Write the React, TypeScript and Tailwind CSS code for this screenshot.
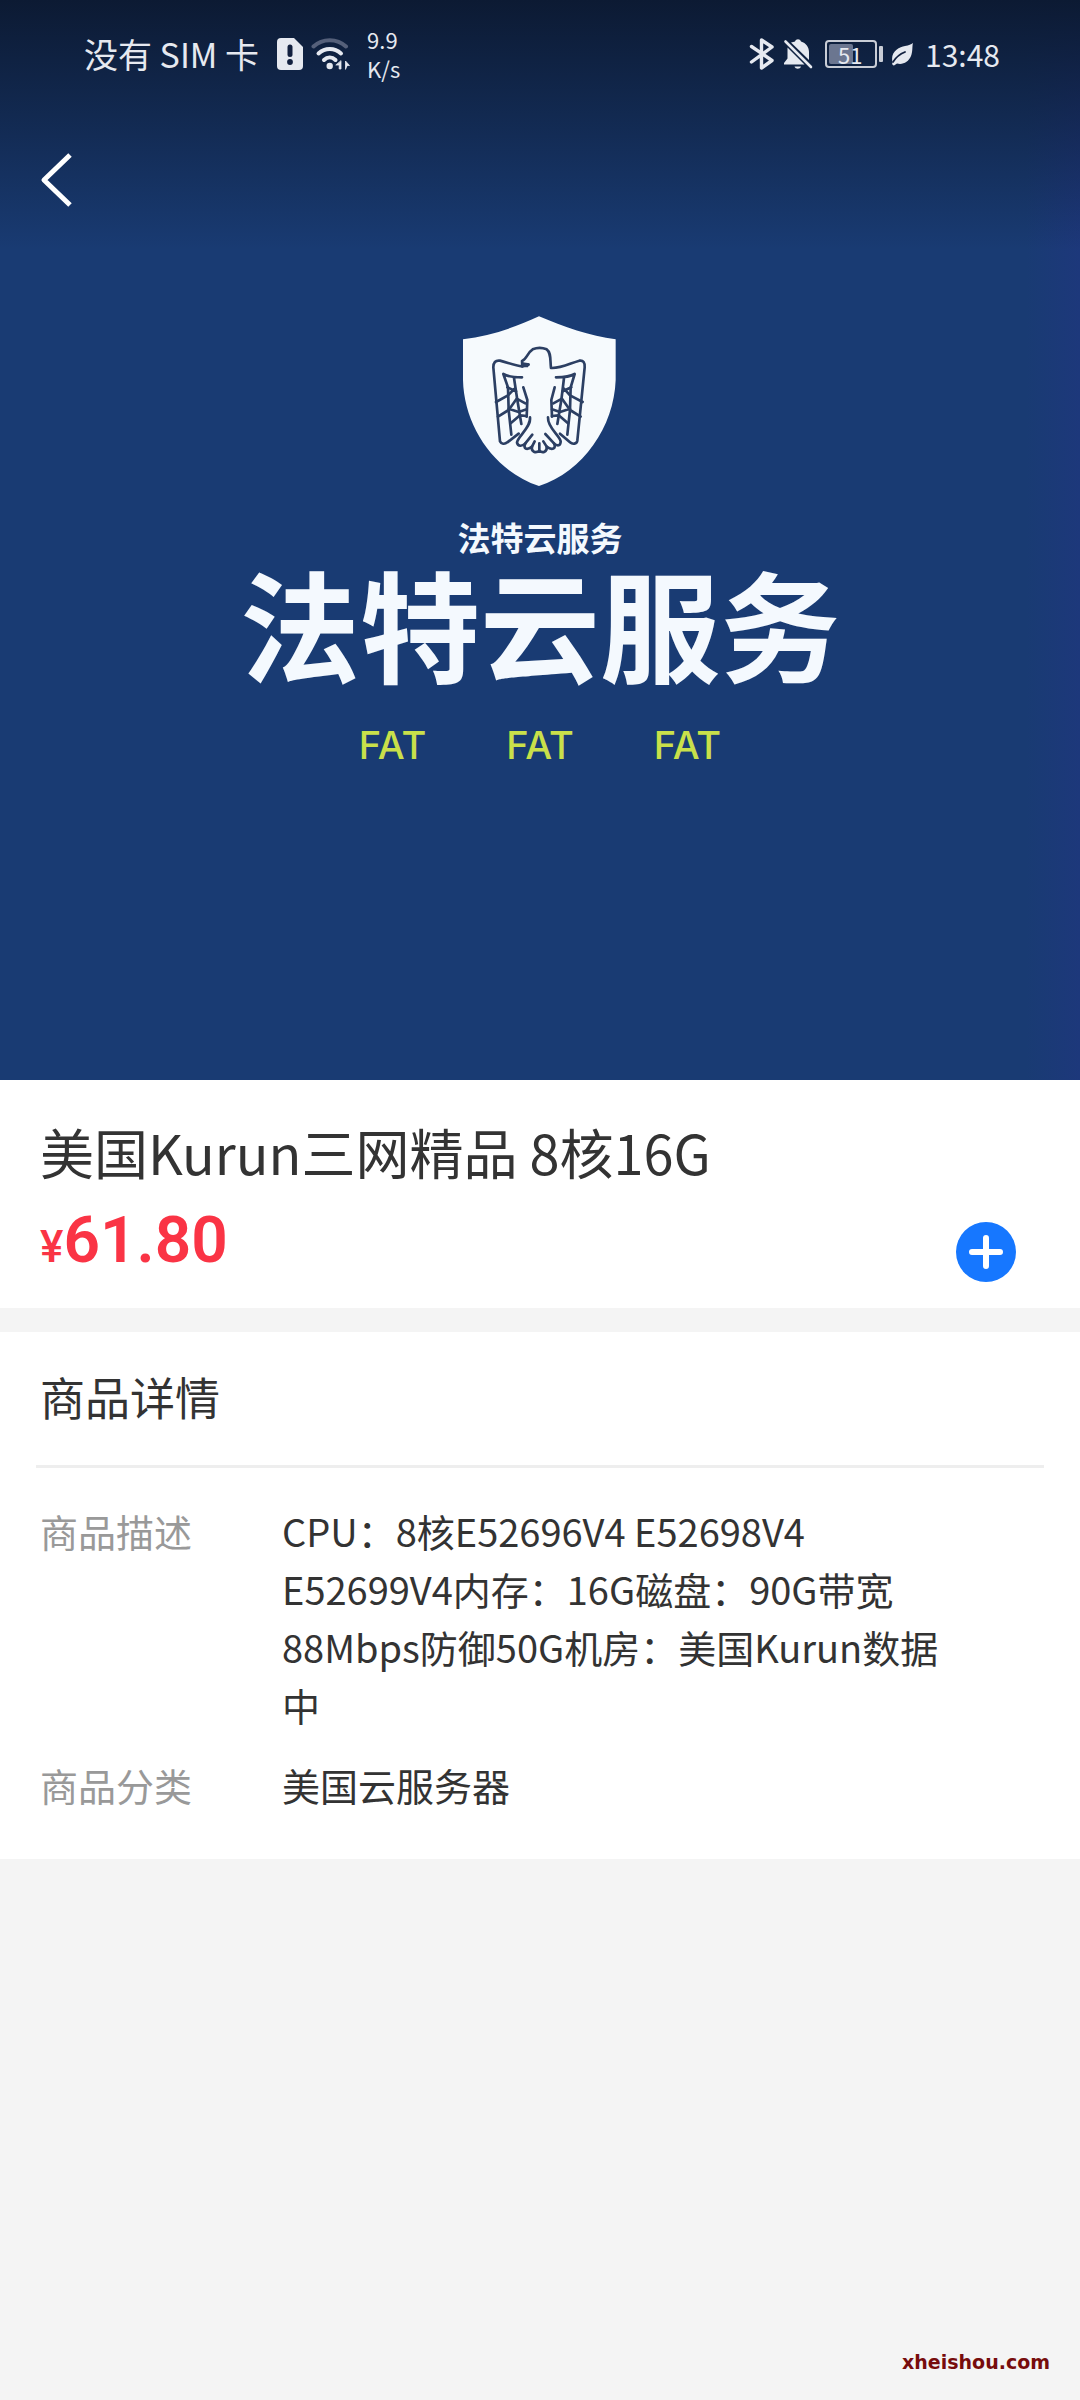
import React from "react";

function SimAlertIcon() {
  return (
    <svg className="h-8 w-[26px]" viewBox="0 0 26 32" aria-hidden="true">
      <path d="M4 0h13l9 9v19a4 4 0 0 1-4 4H4a4 4 0 0 1-4-4V4a4 4 0 0 1 4-4z" fill="#e6e9f0" />
      <rect x="10.500" y="6.500" width="5" height="12.500" rx="2.500" fill="#12203f" />
      <circle cx="13" cy="24" r="2.900" fill="#12203f" />
    </svg>
  );
}

function WifiIcon() {
  return (
    <svg className="h-8 w-10" viewBox="0 0 40 32" fill="none" strokeLinecap="round" aria-hidden="true">
      <path d="M2.500 8.500C11.500 0 26 0 35 8.500" stroke="#55607a" strokeWidth="4" />
      <path d="M7.500 15.500C14 9.500 23.500 9.500 30 15.500" stroke="#e6e9f0" strokeWidth="4" />
      <path d="M13 22C16.500 18.500 21 18.500 24.500 22" stroke="#e6e9f0" strokeWidth="4" />
      <circle cx="18.700" cy="28" r="3.200" fill="#e6e9f0" />
      <path d="M30 23v8h-1.800v-4h-3zM34.500 31v-8l4 4.500h-2z" fill="#e6e9f0" stroke="#e6e9f0" strokeWidth="0.8" />
    </svg>
  );
}

function BluetoothIcon() {
  return (
    <svg className="h-8 w-[26px]" viewBox="0 0 26 32" fill="none" stroke="#e6e9f0" strokeWidth="3.400" strokeLinecap="round" strokeLinejoin="round" aria-hidden="true">
      <path d="M2.500 8.500L23 22.500L12.500 30V2L23 9L2.500 24" />
    </svg>
  );
}

function BellOffIcon() {
  return (
    <svg className="h-8 w-[30px]" viewBox="0 0 30 32" aria-hidden="true">
      <path d="M8 4.500C9.500 4 11 3.800 12 3.500C13 0.500 17 0.500 18 3.500C23 5 26 9 26 14V22z" fill="#e6e9f0" />
      <path d="M4.500 9.500L21.500 26.500H1V25L4.500 20.500z" fill="#e6e9f0" />
      <path d="M11.500 28.500h6.500c-1 3-5.500 3-6.500 0z" fill="#e6e9f0" />
      <path d="M2.500 3.500L28 29" stroke="#e6e9f0" strokeWidth="2.600" strokeLinecap="round" />
    </svg>
  );
}

function LeafIcon() {
  return (
    <svg className="h-6 w-[22px]" viewBox="0 0 22 24" aria-hidden="true">
      <path d="M22 1C21 4 22 9 20 14C17.500 20 12 23 6 21.500L3 23.500C1 23 1 21.500 1.500 20C-1 10 8 5 14 4C18 3.300 20 2.500 22 1z" fill="#e6e9f0" />
      <path d="M2 20C5 15 9 12 14 10" fill="none" stroke="#12203f" strokeWidth="1.800" strokeLinecap="round" />
    </svg>
  );
}

function StatusBar() {
  return (
    <div className="flex h-[108px] items-center justify-between pl-[84px] pr-20 text-[#e6e9f0]">
      <div className="flex items-center">
        <span className="text-[34px] leading-10">没有 SIM 卡</span>
        <span className="ml-[18px]">
          <SimAlertIcon />
        </span>
        <span className="ml-2">
          <WifiIcon />
        </span>
        <span className="ml-4 flex flex-col text-[22px] leading-[29px]">
          <span>9.9</span>
          <span>K/s</span>
        </span>
      </div>
      <div className="flex items-center">
        <BluetoothIcon />
        <span className="ml-2">
          <BellOffIcon />
        </span>
        <span className="ml-3 flex items-center gap-[2px]">
          <span className="flex h-7 w-[52px] items-center rounded-[4px] border-2 border-[#c9cdd6] p-[2px]">
            <span className="flex h-5 w-6 items-center rounded-[2px] bg-[#6b7690] pl-[9px] text-[22px] leading-5">51</span>
          </span>
          <span className="h-4 w-1 rounded-[1px] bg-[#c9cdd6]" />
        </span>
        <span className="ml-2">
          <LeafIcon />
        </span>
        <time className="ml-3 text-[30px] leading-10">13:48</time>
      </div>
    </div>
  );
}

function EagleShield() {
  return (
    <svg className="h-[172px] w-40" viewBox="60 45 480 516" aria-hidden="true">
      <path d="M297 49C370 80 450 108 527 118V240C522 380 430 515 297 558C165 515 72 380 69 240V118C150 108 220 84 297 49z" fill="#f6fafd" />
      <g fill="none" stroke="#2c3f63" strokeWidth="8" strokeLinejoin="round" strokeLinecap="round">
        <path d="M266 194L247 199L246 183C260 178 262 158 278 148C290 143 308 143 320 148C334 158 330 180 333 204C362 206 390 190 418 182C430 180 435 188 434 202L412 422C410 432 398 434 390 427L360 401" />
        <path d="M247 199C224 196 204 188 180 182C166 180 160 188 160 202L180 424C184 432 194 434 202 427L236 401" />
        <path d="M190 222C208 232 226 232 246 232M190 222L204 262L206 330L214 404M222 234L232 300L244 372M250 262L262 300L260 350" />
        <path d="M404 222C388 232 368 232 348 232M404 222L392 262L390 330L382 404M372 234L364 300L352 372M344 262L334 300L336 350" />
        <path d="M168 306L204 286L224 266M202 262L228 274M174 350L206 330L230 296L256 310M206 326L236 336L260 328M212 370L240 346L260 348" />
        <path d="M428 306L390 286L372 266M394 262L368 274M422 350L390 330L366 296L340 310M390 326L360 336L336 328M384 370L356 346L336 348" />
        <path d="M270 352C274 382 232 410 231 428C234 440 246 440 256 430C248 446 260 452 276 440C272 456 288 460 298 452C308 460 322 456 320 440C336 452 350 446 342 430C352 440 362 438 362 424C358 406 322 382 324 352" />
        <path d="M277 404L256 430M284 424L276 440M298 430V452M310 424L320 440M316 402L342 430" />
      </g>
      <path d="M244 186L268 190L264 202L246 202z" fill="#2c3f63" />
    </svg>
  );
}

function Hero() {
  return (
    <section className="relative w-full bg-[#193b73]">
      <div className="flex aspect-square w-full flex-col items-center bg-linear-to-r from-transparent from-95% to-[#1d387b] pt-[315px] font-['Liberation_Sans','Noto_Sans_CJK_SC',sans-serif] text-[#f4f9fe]">
        <EagleShield />
        <p className="mt-[29px] text-[33px] font-bold leading-[48px]">法特云服务</p>
        <h2 className="mt-2 text-[120px] font-bold leading-[120px]">法特云服务</h2>
        <p className="mt-[29px] flex gap-20 font-['Inter',sans-serif] text-[38px] font-medium leading-[48px] text-[#c9e04a]">
          <span>FAT</span>
          <span>FAT</span>
          <span>FAT</span>
        </p>
      </div>
      <header className="absolute inset-x-0 top-0 h-[250px] bg-linear-to-b from-[#0c1a33] to-transparent">
        <StatusBar />
        <button type="button" aria-label="返回" className="mt-9 flex h-[72px] w-[88px] items-center pl-10">
          <svg className="h-14 w-8" viewBox="0 0 32 56" fill="none" stroke="#fff" strokeWidth="5" strokeLinejoin="round" aria-hidden="true">
            <path d="M30 3L4 28L30 53" />
          </svg>
        </button>
      </header>
    </section>
  );
}

function ProductSummary() {
  return (
    <section className="bg-white px-10 pb-[26px] pt-9">
      <h1 className="text-[54px] leading-[72px] text-[#333]">美国Kurun三网精品 8核16G</h1>
      <div className="flex items-end justify-between pr-6">
        <p className="pt-[18px] font-['Roboto',sans-serif] text-[64px] font-semibold leading-[70px] text-[#fa3445]">
          <span className="text-[44px] font-medium">¥</span>
          <span>61.80</span>
        </p>
        <button type="button" aria-label="加入购物车" className="flex size-[60px] items-center justify-center rounded-full bg-[#1677ff]">
          <svg className="size-9" viewBox="0 0 36 36" stroke="#fff" strokeWidth="6" strokeLinecap="round" aria-hidden="true">
            <path d="M18 4V32M4 18H32" />
          </svg>
        </button>
      </div>
    </section>
  );
}

const details = [
  { label: "商品描述", value: "CPU：8核E52696V4 E52698V4 E52699V4内存：16G磁盘：90G带宽88Mbps防御50G机房：美国Kurun数据中" },
  { label: "商品分类", value: "美国云服务器" },
];

function ProductDetails() {
  return (
    <section className="mt-6 bg-white px-9 pb-[45px]">
      <h2 className="border-b-[3px] border-[#eee] pb-9 pl-1 pt-8 text-[45px] leading-[65px] text-[#333]">商品详情</h2>
      <dl className="flex flex-col gap-[22px] pl-1 pr-[86px] pt-[34px] text-[38px] leading-[58px]">
        {details.map((row) => (
          <div key={row.label} className="flex">
            <dt className="w-[242px] shrink-0 text-[#999]">{row.label}</dt>
            <dd className="min-w-0 flex-1 text-[#333]">{row.value}</dd>
          </div>
        ))}
      </dl>
    </section>
  );
}

export default function App() {
  return (
    <main lang="zh-CN" className="flex min-h-screen flex-col bg-[#f4f4f4] font-['Noto_Sans_CJK_SC',sans-serif]">
      <Hero />
      <ProductSummary />
      <ProductDetails />
      <footer className="mt-auto pb-6 pr-[30px] text-right font-['DejaVu_Sans',sans-serif] text-[19px] font-bold leading-7 text-[#770c0c]">
        xheishou.com
      </footer>
    </main>
  );
}
